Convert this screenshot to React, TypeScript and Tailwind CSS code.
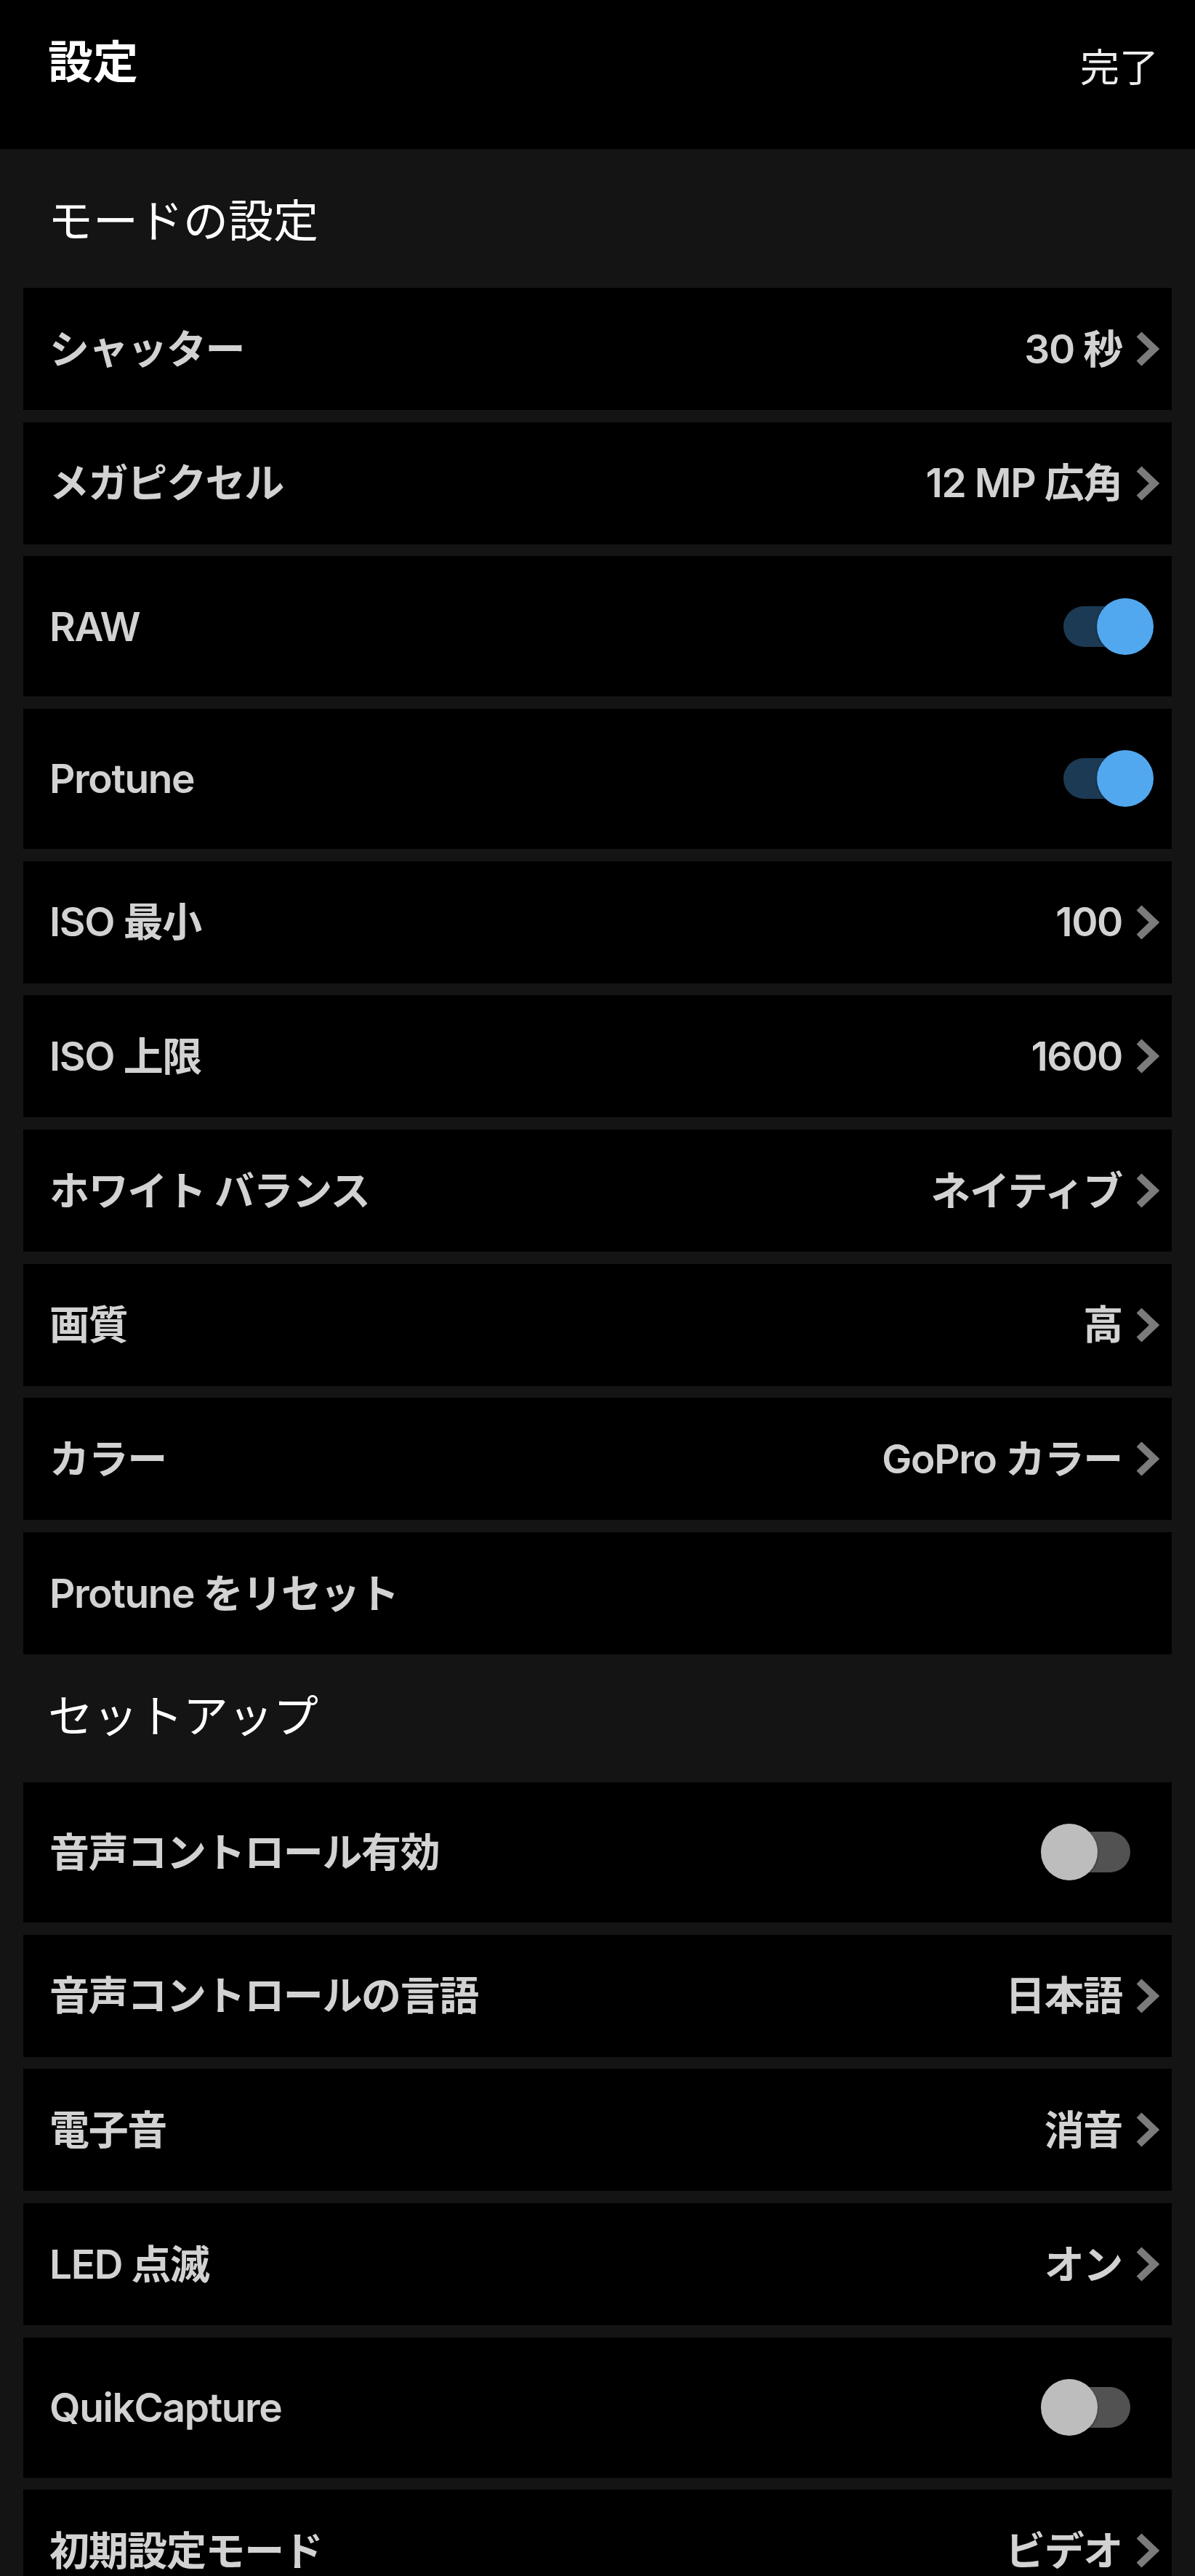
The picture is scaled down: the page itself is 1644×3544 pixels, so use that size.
import { useState } from "react";

type Row =
  | { kind: "link"; label: string; value: string }
  | { kind: "toggle"; label: string; on: boolean }
  | { kind: "action"; label: string };

const modeRows: Row[] = [
  { kind: "link", label: "シャッター", value: "30 秒" },
  { kind: "link", label: "メガピクセル", value: "12 MP 広角" },
  { kind: "toggle", label: "RAW", on: true },
  { kind: "toggle", label: "Protune", on: true },
  { kind: "link", label: "ISO 最小", value: "100" },
  { kind: "link", label: "ISO 上限", value: "1600" },
  { kind: "link", label: "ホワイト バランス", value: "ネイティブ" },
  { kind: "link", label: "画質", value: "高" },
  { kind: "link", label: "カラー", value: "GoPro カラー" },
  { kind: "action", label: "Protune をリセット" },
];

const setupRows: Row[] = [
  { kind: "toggle", label: "音声コントロール有効", on: false },
  { kind: "link", label: "音声コントロールの言語", value: "日本語" },
  { kind: "link", label: "電子音", value: "消音" },
  { kind: "link", label: "LED 点滅", value: "オン" },
  { kind: "toggle", label: "QuikCapture", on: false },
  { kind: "link", label: "初期設定モード", value: "ビデオ" },
];

function Chevron() {
  return (
    <svg width="34" height="48" viewBox="0 0 34 48" className="shrink-0">
      <polyline
        points="6,4 27,24 6,44"
        fill="none"
        stroke="#7b7b7b"
        strokeWidth="10"
        strokeLinejoin="miter"
      />
    </svg>
  );
}

function Toggle({ initial }: { initial: boolean }) {
  const [on, setOn] = useState(initial);
  return (
    <button
      onClick={() => setOn((v) => !v)}
      className="relative h-[78px] w-[155px] shrink-0"
    >
      <span
        className={`absolute left-[31px] top-[11px] h-[56px] w-[92px] rounded-full ${
          on ? "bg-[#1c3a53]" : "bg-[#525252]"
        }`}
      />
      <span
        className={`absolute top-0 h-[78px] w-[78px] rounded-full shadow-[0_1px_3px_rgba(0,0,0,0.5)] ${
          on ? "left-[77px] bg-[#52a8ef]" : "left-0 bg-[#bdbdbd]"
        }`}
      />
    </button>
  );
}

function SettingRow({ row }: { row: Row }) {
  const text = "text-[55px] font-semibold tracking-[-0.025em] text-[#d2d2d2]";
  if (row.kind === "toggle") {
    return (
      <div className="flex h-[193px] items-center justify-between bg-black pl-[36px] pr-[25px]">
        <span className={text}>{row.label}</span>
        <Toggle initial={row.on} />
      </div>
    );
  }
  return (
    <div className="flex h-[168px] shrink-0 items-center justify-between bg-black pl-[36px] pr-[17px]">
      <span className={text}>{row.label}</span>
      {row.kind === "link" && (
        <div className="flex items-center gap-[17px]">
          <span className={text}>{row.value}</span>
          <Chevron />
        </div>
      )}
    </div>
  );
}

export default function App() {
  return (
    <div className="h-[3544px] w-full overflow-hidden bg-[#141414] font-['Inter','Noto_Sans_CJK_JP',sans-serif]">
      <header className="flex h-[205px] items-start justify-between bg-black pl-[66px] pr-[50px]">
        <h1 className="mt-[55px] text-[62px] font-bold leading-none text-white">設定</h1>
        <button className="mt-[67px] text-[54px] leading-none text-[#ececec]">完了</button>
      </header>

      <h2 className="pl-[66px] pt-[69px] pb-[60px] text-[62px] leading-none text-white">
        モードの設定
      </h2>
      <div className="mx-[32px] flex flex-col gap-[16.67px]">
        {modeRows.map((row) => (
          <SettingRow key={row.label} row={row} />
        ))}
      </div>

      <h2 className="pl-[66px] pt-[55px] pb-[59px] text-[62px] leading-none text-white">
        セットアップ
      </h2>
      <div className="mx-[32px] flex flex-col gap-[16.67px]">
        {setupRows.map((row) => (
          <SettingRow key={row.label} row={row} />
        ))}
      </div>
    </div>
  );
}
